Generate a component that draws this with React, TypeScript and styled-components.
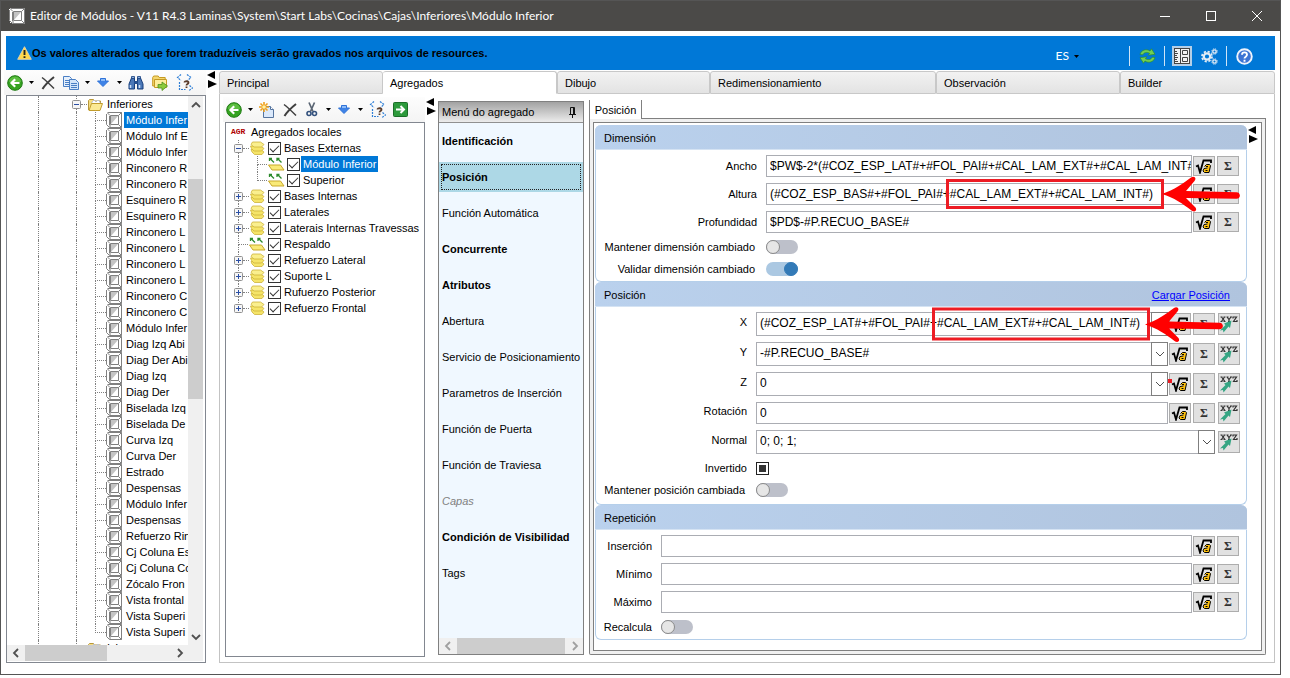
import React, { useEffect, useRef } from "react";
import styled, { createGlobalStyle, css } from "styled-components";

const GlobalStyle = createGlobalStyle`
  *, *::before, *::after { box-sizing: border-box; }
  body { margin: 0; background: #fff; }
  body, button, input, select {
    font-family: "Liberation Sans", Arial, sans-serif;
    font-size: 11px;
    line-height: 16px;
    color: #000;
  }
  button { border: 0; background: none; padding: 0; margin: 0; }
  ul { list-style: none; margin: 0; padding: 0; }
  svg { display: block; flex: none; }
`;

/* ---------- window frame ---------- */

const Page = styled.div`
  height: 100vh;
  padding: 0 9px 3px 0;
`;

const Window = styled.div`
  height: 100%;
  display: flex;
  flex-direction: column;
  border: 1px solid #555;
  background: #fff;
`;

const TitleBar = styled.header`
  display: flex;
  align-items: center;
  height: 30px;
  flex: none;
  padding-left: 8px;
  gap: 5px;
  background: #4b4a48;
  color: #fff;
`;

const Title = styled.h1`
  flex: 1;
  margin: 0;
  font: 400 12px/16px Lato, "Noto Sans", sans-serif;
  white-space: nowrap;
`;

const ControlStrip = styled.div`
  display: flex;
`;

const WindowButton = styled.button`
  width: 46px;
  height: 29px;
  display: grid;
  place-items: center;
`;

const Banner = styled.div`
  display: flex;
  align-items: center;
  flex: none;
  height: 34px;
  margin: 5px 5px 0;
  padding: 0 21px 0 11px;
  background: #0078d7;
`;

const BannerText = styled.strong`
  flex: 1;
  white-space: nowrap;
`;

const BannerTools = styled.div`
  display: flex;
  align-items: center;
  gap: 7px;
  padding-top: 6px;
`;

const LanguageButton = styled.button`
  display: flex;
  align-items: center;
  gap: 5px;
  margin-right: 43px;
  color: #fff;
  font: 400 12px/16px Lato, "Noto Sans", sans-serif;
  svg { color: #000; }
`;

const Divider = styled.span`
  width: 1px;
  height: 20px;
  background: #cfe4f7;
`;

const BannerButton = styled.button<{ $on?: boolean }>`
  display: grid;
  place-items: center;
  width: 20px;
  height: 20px;
  background: ${(p) => (p.$on ? "#b5cfe7" : "none")};
`;

const Body = styled.div`
  flex: 1;
  min-height: 0;
  display: flex;
  padding: 0 5px 11px;
`;

/* ---------- toolbars ---------- */

const Toolbar = styled.div`
  display: flex;
  align-items: center;
  flex: none;
  height: 25px;
  margin-left: -2px;
  background: linear-gradient(#fdfdfd, #f4f4f4);
`;

const ToolButton = styled.button<{ $wide?: boolean }>`
  display: grid;
  place-items: center;
  width: ${(p) => (p.$wide ? 24 : 22)}px;
  height: 24px;
`;

const CaretButton = styled.button`
  display: grid;
  place-items: center;
  width: 10px;
  height: 24px;
`;

/* ---------- trees ---------- */

const LeftColumn = styled.aside`
  width: 200px;
  flex: none;
  display: flex;
  flex-direction: column;
`;

const TreeBox = styled.div`
  flex: 1;
  min-height: 0;
  display: grid;
  grid-template-columns: 1fr 15px;
  grid-template-rows: 1fr 16px;
  border: 1px solid #828790;
  padding: 0 2px 1px 0;
  background: #fff;
`;

const TreeView = styled.ul`
  min-width: 0;
  min-height: 0;
  overflow: hidden;
`;

const TreeRow = styled.li`
  display: flex;
  align-items: center;
  height: 16px;
  white-space: nowrap;
`;

const Guide = styled.span<{ $w: number; $blank?: boolean }>`
  flex: none;
  width: ${(p) => p.$w}px;
  height: 16px;
  border-left: ${(p) => (p.$blank ? "0" : "1px dotted #808080")};
`;

const Elbow = styled.span<{ $w: number; $last?: boolean }>`
  flex: none;
  width: ${(p) => p.$w}px;
  height: 16px;
  display: flex;
  flex-direction: column;
  &::before {
    content: "";
    height: 9px;
    border-left: 1px dotted #808080;
    border-bottom: 1px dotted #808080;
  }
  &::after {
    content: "";
    flex: 1;
    border-left: ${(p) => (p.$last ? "0" : "1px dotted #808080")};
  }
`;

const Dots = styled.span<{ $w: number }>`
  flex: none;
  width: ${(p) => p.$w}px;
  border-top: 1px dotted #808080;
`;

const TreeLabel = styled.span<{ $selected?: boolean }>`
  padding: 0 2px;
  color: ${(p) => (p.$selected ? "#fff" : "#000")};
  background: ${(p) => (p.$selected ? "#0078d7" : "none")};
`;

const ClippedLabel = styled(TreeLabel)`
  margin-left: 2px;
  padding-right: 0;
  flex: 1;
`;

/* ---------- scroll bars ---------- */

const VScroll = styled.div`
  display: flex;
  flex-direction: column;
  align-items: stretch;
  background: #f0f0f0;
`;

const HScroll = styled.div`
  display: flex;
  height: 16px;
  background: #f0f0f0;
`;

const ScrollArrow = styled.button<{ $vertical?: boolean }>`
  display: grid;
  place-items: center;
  flex: none;
  width: ${(p) => (p.$vertical ? 15 : 17)}px;
  height: ${(p) => (p.$vertical ? 17 : 16)}px;
`;

const Track = styled.div<{ $before: number; $thumb: number; $after: number; $vertical?: boolean }>`
  flex: 1;
  display: grid;
  ${(p) =>
    p.$vertical
      ? css`grid-template-rows: ${p.$before}fr ${p.$thumb}fr ${p.$after}fr;`
      : css`grid-template-columns: ${p.$before}fr ${p.$thumb}fr ${p.$after}fr;`}
  &::before { content: ""; }
`;

const Thumb = styled.span`
  background: #cdcdcd;
`;

/* ---------- splitters and tabs ---------- */

const Splitter = styled.div`
  flex: none;
  width: 13px;
  padding: 1px 1px 0;
`;

const MainColumn = styled.div`
  flex: 1;
  min-width: 0;
  display: flex;
  flex-direction: column;
`;

const TabStrip = styled.div`
  display: grid;
  grid-template-columns: 164fr 174fr 153fr 226fr 184fr 155fr;
  flex: none;
  height: 24px;
  padding-top: 1px;
`;

const Tab = styled.button<{ $active?: boolean }>`
  min-width: 0;
  padding: 0 7px;
  text-align: left;
  border: 1px solid #c8c8c8;
  border-left-width: ${(p) => (p.$active ? 0 : 1)}px;
  border-bottom-color: ${(p) => (p.$active ? "#fff" : "#c8c8c8")};
  border-radius: 3px 3px 0 0;
  background: ${(p) => (p.$active ? "#fff" : "linear-gradient(#f2f2f2, #e3e3e3)")};
`;

const TabPanel = styled.main`
  flex: 1;
  min-height: 0;
  display: flex;
  border: 1px solid #c3c3c3;
  border-top: 0;
  padding: 3px 8px 5px 5px;
`;

const AggregateColumn = styled.section`
  width: 200px;
  flex: none;
  display: flex;
  flex-direction: column;
`;

const AggregateTree = styled.ul`
  flex: 1;
  min-height: 0;
  border: 1px solid #828790;
  padding-top: 1px;
  overflow: hidden;
`;

const AgrMark = styled.span`
  width: 18px;
  margin-left: 5px;
  color: #b00000;
  font: 700 8px/16px "Liberation Mono", monospace;
`;

const TreeCheck = styled.input`
  appearance: none;
  flex: none;
  width: 13px;
  height: 13px;
  margin: 0 1px 0 0;
  border: 1px solid #333;
  background: #fff;
  display: grid;
  place-items: center;
  &:checked::after {
    content: "";
    width: 9px;
    height: 5px;
    border: solid #333;
    border-width: 0 0 1px 1px;
    transform: translateY(-1px) rotate(-45deg);
  }
`;

/* ---------- aggregate menu ---------- */

const MenuPanel = styled.nav`
  width: 146px;
  flex: none;
  display: flex;
  flex-direction: column;
  margin: 4px 5px 2px 0;
  border: 1px solid #808080;
  background: #f0f8ff;
`;

const MenuHeader = styled.div`
  display: flex;
  align-items: center;
  justify-content: space-between;
  flex: none;
  height: 21px;
  padding: 0 6px 0 3px;
  border-bottom: 1px solid #909090;
  background: linear-gradient(#a2a2a2, #ececec);
`;

const MenuList = styled.ul`
  flex: 1;
  min-height: 0;
  li { padding: 3px 0; }
`;

const MenuItem = styled.button<{ $bold?: boolean; $muted?: boolean; $selected?: boolean }>`
  display: block;
  width: 100%;
  height: 30px;
  padding: 0 3px;
  text-align: left;
  white-space: nowrap;
  font-weight: ${(p) => (p.$bold ? 700 : 400)};
  font-style: ${(p) => (p.$muted ? "italic" : "normal")};
  color: ${(p) => (p.$muted ? "#808080" : "#000")};
  background: ${(p) => (p.$selected ? "#add8e6" : "none")};
  outline: ${(p) => (p.$selected ? "1px dotted #222" : "0")};
  outline-offset: -3px;
`;

/* ---------- editor ---------- */

const Editor = styled.section`
  flex: 1;
  min-width: 0;
  display: flex;
  flex-direction: column;
  margin: 3px 0 2px;
`;

const EditorTabs = styled.div`
  display: flex;
  flex: none;
  height: 19px;
  &::after {
    content: "";
    flex: 1;
    border-bottom: 1px solid #808080;
  }
`;

const EditorTab = styled.button`
  width: 53px;
  border: solid #808080;
  border-width: 0 1px;
  background: #fff;
`;

const EditorFrame = styled.div`
  flex: 1;
  min-height: 0;
  display: flex;
  border: 1px solid #808080;
  border-top: 0;
  border-radius: 0 0 2px 2px;
  padding: 3px;
  background: #f0f0f0;
`;

const EditorInner = styled.div`
  flex: 1;
  min-width: 0;
  display: flex;
  border: 1px solid #808080;
  padding: 2px 1px 0 1px;
  background: #fff;
`;

const Groups = styled.div`
  flex: 1;
  min-width: 0;
`;

const Group = styled.section<{ $bottom: number }>`
  padding-bottom: ${(p) => p.$bottom}px;
  border: 1px solid #b5cfea;
  border-top: 0;
  border-radius: 6px;
`;

const GroupHeader = styled.header`
  display: flex;
  align-items: center;
  justify-content: space-between;
  height: 25px;
  margin: 0 -1px 5px;
  padding: 2px 17px 0 9px;
  border-bottom: 1px solid #d5e3f3;
  border-radius: 6px 6px 0 0;
  background: linear-gradient(90deg, #bad1ed, #b0c4de);
`;

const GroupTitle = styled.h2`
  margin: 0;
  font-size: 11px;
  font-weight: 400;
`;

const HeaderLink = styled.a`
  color: #0000ff;
`;

const Fields = styled.div<{ $label: number; $end: number }>`
  display: grid;
  grid-template-columns: ${(p) => p.$label}px minmax(0, 1fr);
  column-gap: 9px;
  row-gap: 6px;
  padding-right: ${(p) => p.$end}px;
`;

const FieldLabel = styled.label<{ $raised?: boolean; $inset?: boolean }>`
  align-self: center;
  text-align: right;
  white-space: nowrap;
  padding-bottom: ${(p) => (p.$raised ? 4 : 0)}px;
  padding-right: ${(p) => (p.$inset ? 2 : 0)}px;
`;

const FieldRow = styled.div`
  position: relative;
  display: flex;
  align-items: center;
  gap: 2px;
  min-width: 0;
`;

const boxed = css`
  width: 100%;
  min-width: 0;
  border: 1px solid #abadb3;
  border-radius: 0;
  background: #fff;
  font-size: 12px;
  line-height: 16px;
`;

const TextBox = styled.input`
  ${boxed}
  flex: 1;
  height: 22px;
  padding: 0 0 0 3px;
`;

const ComboWrap = styled.div`
  position: relative;
  flex: 1;
  min-width: 0;
`;

const ComboSelect = styled.select`
  ${boxed}
  appearance: none;
  display: block;
  height: 24px;
  padding: 0 18px 2px 3px;
`;

const ComboArrow = styled.span`
  position: absolute;
  top: 0;
  right: 0;
  bottom: 0;
  width: 17px;
  display: grid;
  place-items: center;
  border: 1px solid #7f7f7f;
  pointer-events: none;
`;

const SquareButton = styled.button<{ $tall?: boolean; $apart?: boolean }>`
  flex: none;
  display: grid;
  place-items: center;
  width: 22px;
  height: ${(p) => (p.$tall ? 22 : 20)}px;
  margin-left: ${(p) => (p.$apart ? 1 : 0)}px;
  border: 1px solid #adadad;
  background: #e1e1e1;
`;

const FormulaButton = styled(SquareButton)`
  margin-left: -1px;
`;

const Sigma = styled.span`
  font: 700 12px/14px "Liberation Serif", serif;
  color: #333;
`;

const Switch = styled.input`
  appearance: none;
  display: block;
  width: 32px;
  height: 14px;
  margin: 1px 0;
  border-radius: 7px;
  background: #bdc0ca;
  &::before {
    content: "";
    display: block;
    width: 14px;
    height: 14px;
    border: 1px solid #8a8a8a;
    border-radius: 50%;
    background: #e6e6e6;
  }
  &:checked { background: #abc8e2; }
  &:checked::before {
    margin-left: 18px;
    border-color: #337ab7;
    background: #337ab7;
  }
`;

const TriState = styled.input`
  appearance: none;
  display: grid;
  place-items: center;
  width: 13px;
  height: 13px;
  margin: 1px 0;
  border: 1px solid #222;
  background: #fff;
  &:indeterminate::before {
    content: "";
    width: 7px;
    height: 7px;
    background: #333;
  }
`;

/* ---------- annotations drawn over the fields ---------- */

const Highlight = styled.div<{ $left: number; $height: number; $overlap: number }>`
  position: absolute;
  left: ${(p) => p.$left}px;
  top: 50%;
  width: 218px;
  height: ${(p) => p.$height}px;
  transform: translateY(-50%);
  border: 3px solid #ed1c24;
  pointer-events: none;
  z-index: 1;
  svg {
    position: absolute;
    left: calc(100% + 3px - ${(p) => p.$overlap}px);
    top: 50%;
    margin-top: -18px;
  }
`;

const RedDot = styled.span`
  position: absolute;
  right: 68px;
  top: 7px;
  width: 4px;
  height: 4px;
  background: #ed1c24;
`;

/* ---------- icons ---------- */

const BoxIcon = () => (
  <svg width="16" height="16" viewBox="0 0 16 16" fill="none" stroke="#808080">
    <path d="M0 1h1V0h15v16H3v-1H1v-2H0z" fill="#fff" stroke="none" />
    <path d="M1.500.5h14v15h-12M.5 2v10.500l3 3" />
    <path d="M4.500 3.500h8v9h-8zM3.500 4v9" />
    <path d="M5 12V4h7z" fill="#c4c4c4" stroke="none" />
    <path d="M1.500 1l2.500 2.500M15.500.5l-3 3M12.500 12.500l3 3M4 13v2.500" />
  </svg>
);

const FolderIcon = () => (
  <svg width="15" height="13" viewBox="0 0 15 13">
    <path d="M.5 12V2.500l1-1h4l1 1.500h6v2" fill="#f5dd82" stroke="#b8973a" />
    <path d="M4 4l2-2 2 2 2-2 2 2v3H4z" fill="#fff" stroke="#a9b4d0" strokeWidth=".7" />
    <path d="M1 12.500 3.500 5.500h11L12 12.500z" fill="#fbe995" stroke="#c29d2c" />
  </svg>
);

const Expander = ({ open, first, last }: { open?: boolean; first?: boolean; last?: boolean }) => (
  <svg width="9" height="16" viewBox="0 0 9 16">
    {!first && <path d="M4.500 0v4" stroke="#808080" strokeDasharray="1 1" />}
    {!last && <path d="M4.500 13v3" stroke="#808080" strokeDasharray="1 1" />}
    <rect x=".5" y="4.500" width="8" height="8" rx="1" fill="#f6f6f6" stroke="#919191" />
    <path d={open ? "M2 8.500h5" : "M2 8.500h5M4.500 6v5"} stroke="#2b4fa5" />
  </svg>
);

const LayersIcon = () => (
  <svg width="15" height="14" viewBox="0 0 15 14" fill="#f5e468" stroke="#cdb33a" strokeWidth=".8">
    <path d="M1 8.500h10l3 2.500-2 2.500H4.500L2 11z" />
    <path d="M.5 5h10L14 7.500 11.500 10H4L1.500 7.500z" />
    <path d="M2.500 1h8L14 3.500 11.500 6H4L1 3.500z" fill="#faef8e" />
  </svg>
);

const PanelIcon = () => (
  <svg width="18" height="14" viewBox="0 0 18 14">
    <path d="M1.500 8h12l3.500 5H5z" fill="#f9ea78" stroke="#c9a92b" />
    <path d="M3 1.500l4 4M2.500 4V1.500H5M10.500 1.500l4 4M10 4V1.500h2.500" stroke="#2c8a2c" strokeWidth="1.300" fill="none" />
  </svg>
);

const BackIcon = () => (
  <svg width="16" height="16" viewBox="0 0 16 16">
    <circle cx="8" cy="8" r="7.300" fill="#35a321" stroke="#1e7a12" />
    <path d="M2 7a6 5.500 0 0 1 12 0z" fill="#74cf55" opacity=".6" />
    <path d="M12.500 8H5M8.200 4.300 4.500 8l3.700 3.700" stroke="#fff" strokeWidth="2.200" fill="none" />
  </svg>
);

const Caret = () => (
  <svg width="5" height="3" viewBox="0 0 5 3">
    <path d="M0 0h5L2.500 3z" fill="currentColor" />
  </svg>
);

const CrossIcon = () => (
  <svg width="14" height="14" viewBox="0 0 14 14" stroke="#3f3f3f" fill="none">
    <path d="M1 1.500c4 3 8 7 12 11" strokeWidth="1.500" />
    <path d="M13 1C8 5 4 9 1.500 13" strokeWidth="2" />
  </svg>
);

const CopyIcon = () => (
  <svg width="16" height="14" viewBox="0 0 16 14" stroke="#4a7fc4">
    <path d="M.5.5h6l2 2v8h-8z" fill="#e6f0fc" />
    <path d="M2 4.500h4M2 6.500h4M2 8.500h4" />
    <path d="M6.500 3.500h6l3 3v7h-9z" fill="#d3e5fa" />
    <path d="M8 7.500h6M8 9.500h6M8 11.500h6" />
  </svg>
);

const DownIcon = () => (
  <svg width="12" height="9" viewBox="0 0 12 9">
    <path d="M3.500.5h5V3h3L6 8.500.5 3h3z" fill="#3f83e6" stroke="#2f72d8" />
    <path d="M4 1h4v2H4z" fill="#8dbcf8" />
  </svg>
);

const BinocularsIcon = () => (
  <svg width="16" height="14" viewBox="0 0 16 14">
    <path d="M1 13V8l2.500-6h3v11zM15 13V8l-2.500-6h-3v11z" fill="#4b78b8" stroke="#173f7d" />
    <path d="M6 5h4v3H6z" fill="#264f8f" />
    <path d="M3.500.5h3v2h-3zM9.500.5h3v2h-3z" fill="#8fb2e0" stroke="#173f7d" strokeWidth=".8" />
    <path d="M2.500 9v3M11.500 9v3" stroke="#cfe0f7" strokeWidth="1.500" />
  </svg>
);

const FolderArrowIcon = () => (
  <svg width="16" height="16" viewBox="0 0 16 16">
    <path d="M.7 11V2.500l1-1.500h4.500l1 1.500h6V11z" fill="#f5d76e" stroke="#c59a22" />
    <path d="M2.500 12.500v-8h12v8z" fill="#fdee9d" stroke="#c59a22" />
    <path d="M6 9.500h4V7l5.500 4-5.500 4.500V13H6z" fill="#8ccb3c" stroke="#4f8f1c" strokeWidth=".8" />
  </svg>
);

const QueryIcon = () => (
  <svg width="17" height="17" viewBox="0 0 17 17" fill="none">
    <path d="M5 .5 1.500 3.500 5 6.500M11 .5l4 3-3.500 3M3.500 8v7.500h6M13.500 11.500l3 2.500-3.500 2.500" stroke="#2f7fd6" strokeWidth="1.200" strokeDasharray="2 1" />
    <path d="M8.500 8.500c0-1.700 4-1.700 4 .2 0 1.500-2 1.300-2 2.800M10.500 12.500v1.500" stroke="#5b3d2b" strokeWidth="1.800" />
  </svg>
);

const NewIcon = () => (
  <svg width="16" height="16" viewBox="0 0 16 16">
    <path d="M4.500 4.500h7l3 3v8h-10z" fill="#dbe9fb" stroke="#55749f" />
    <path d="M11.500 4.500v3h3" fill="#fff" stroke="#55749f" />
    <path d="M5 0v10M0 5h10M1.500 1.500l7 7M8.500 1.500l-7 7" stroke="#f0a11c" strokeWidth="1.600" />
    <circle cx="5" cy="5" r="1.800" fill="#fff2a8" />
  </svg>
);

const CutIcon = () => (
  <svg width="12" height="15" viewBox="0 0 12 15" fill="none">
    <path d="M3 .5l4 9M8.500.5 4.500 9.500" stroke="#5a6573" strokeWidth="1.700" />
    <circle cx="3" cy="11.500" r="2" stroke="#34527e" strokeWidth="1.600" />
    <circle cx="8.500" cy="11.500" r="2" stroke="#34527e" strokeWidth="1.600" />
  </svg>
);

const GoIcon = () => (
  <svg width="15" height="15" viewBox="0 0 15 15">
    <rect x=".5" y=".5" width="14" height="14" rx="1" fill="#2d9a3c" stroke="#1b6e28" />
    <path d="M3 7.500h8M7.500 4 11 7.500 7.500 11" stroke="#fff" strokeWidth="2" fill="none" />
  </svg>
);

const WarningIcon = () => (
  <svg width="15" height="14" viewBox="0 0 15 14">
    <path d="M7.500.7 14.300 13.300H.7z" fill="#ffd84a" stroke="#d9cfae" strokeLinejoin="round" />
    <path d="M7.500 4v5M7.500 10.200v1.800" stroke="#222" strokeWidth="1.900" />
  </svg>
);

const SyncIcon = () => (
  <svg width="17" height="16" viewBox="0 0 17 16" fill="#6fce55" stroke="#2c8a1c" strokeWidth=".6">
    <path d="M1 6.500C2 2 7.500.5 11 3L12.500.8 16 6.300l-6.700.9 1.300-2C8 3.800 5 4.200 3.800 6.800z" />
    <path d="M16 9.500c-1 4.500-6.500 6-10 3.500l-1.500 2.200L1 9.700l6.700-.9-1.300 2c2.600 1.400 5.600 1 6.800-1.600z" />
  </svg>
);

const FormIcon = () => (
  <svg width="16" height="16" viewBox="0 0 16 16" fill="#f3f3f3" stroke="#444">
    <rect x=".5" y=".5" width="15" height="15" />
    <path d="M6.500 1v14M1 3.500h2M1 5.500h3M1 7.500h2M1 9.500h3M1 11.500h2M1 13.500h3" />
    <path d="M8.500 2.500h5v4h-5zM8.500 9.500h5v4h-5z" />
  </svg>
);

const GearsIcon = () => (
  <svg width="17" height="17" viewBox="0 0 17 17" fill="none" stroke="#e3ecf5">
    <circle cx="6" cy="8.500" r="3.200" strokeWidth="2.200" />
    <circle cx="6" cy="8.500" r="5" strokeWidth="1.800" strokeDasharray="2.200 1.730" />
    <circle cx="13.500" cy="3.500" r="1.700" strokeWidth="1.300" />
    <circle cx="13.500" cy="3.500" r="2.700" strokeWidth="1" strokeDasharray="1.200 .92" />
    <circle cx="13.500" cy="13.500" r="1.700" strokeWidth="1.300" />
    <circle cx="13.500" cy="13.500" r="2.700" strokeWidth="1" strokeDasharray="1.200 .92" />
  </svg>
);

const HelpIcon = () => (
  <svg width="17" height="17" viewBox="0 0 17 17" fill="none">
    <circle cx="8.500" cy="8.500" r="7.300" fill="#3c74d4" stroke="#eef3fc" strokeWidth="1.900" />
    <path d="M6 6.800c0-3.200 5-3.200 5 0 0 1.900-2.500 1.800-2.500 3.700M8.500 11.800v1.900" stroke="#fff" strokeWidth="1.900" />
  </svg>
);

const PinIcon = () => (
  <svg width="9" height="11" viewBox="0 0 9 11" fill="none" stroke="#111">
    <path d="M2.500 7V.5h4V7M1 7.500h7M4.500 8v3M5.500 1v6" />
  </svg>
);

const SplitArrows = () => (
  <svg width="11" height="17" viewBox="0 0 11 17">
    <path d="M8 0v8L0 4zM1 9v8l9-4z" fill="#000" />
  </svg>
);

const RootIcon = () => (
  <svg width="18" height="16" viewBox="0 0 18 16" fill="none">
    <path d="M1 8.500l2-1 2 7L8.500 2.500H16V5" stroke="#000" strokeWidth="1.800" />
    <path d="M9.500 8.500l2-2h3l1 1.200-1.500 6.800H9.500L8 13l1-2.500 3.500-.5" fill="#ffc20e" stroke="#000" />
    <path d="M10.500 12.500h2M13 8.500h-2" stroke="#000" />
  </svg>
);

const XyzIcon = () => (
  <svg width="18" height="17" viewBox="0 0 18 17" fill="none">
    <path d="M1.500 1 5 5.500M4.500 1 1.500 5.500M.5 1h2M3.500 1h2M.5 5.500h2M3.500 5.500h2M7 1l2 2.500L11 1M9 3.500v2M6.500 1h2M10 1h2M8 5.500h2M13 2.500V1h3.500L13.500 5.500h3.500V4" stroke="#333" strokeWidth="1.200" />
    <path d="M0 14.500 5.500 9 4 7.500l7.500-3L10 12 8.500 10.500 3.500 16.500 3 14z" fill="#35a583" />
  </svg>
);

const Chevron = ({ turn, color = "#505050", thin }: { turn: number; color?: string; thin?: boolean }) => (
  <svg width="10" height="10" viewBox="0 0 10 10" fill="none">
    <path d="M1 3 5 7 9 3" stroke={color} strokeWidth={thin ? 1 : 1.800} transform={`rotate(${turn} 5 5)`} />
  </svg>
);

const RedArrow = () => (
  <svg width="78" height="36" viewBox="0 0 78 36">
    <path
      d="M0 18C12 14 22 7 29 1.500c3-2 6 .5 3.500 3.500L24 15l50.500 1.200c4.500.3 4.500 6.300 0 6.500L24 22l9.500 9.500c2 3.500-1 5-4 3C21 28 12 21.500 0 18z"
      fill="#ff0000"
    />
  </svg>
);

/* ---------- data ---------- */

const moduleNames = [
  "Módulo Infer", "Módulo Inf E", "Módulo Infer", "Rinconero R", "Rinconero R", "Esquinero R", "Esquinero R",
  "Rinconero L", "Rinconero L", "Rinconero L", "Rinconero L", "Rinconero C", "Rinconero C", "Módulo Infer",
  "Diag Izq Abi", "Diag Der Abi", "Diag Izq", "Diag Der", "Biselada Izq", "Biselada De", "Curva Izq", "Curva Der",
  "Estrado", "Despensas", "Módulo Infer", "Despensas", "Refuerzo Rin", "Cj Coluna Es", "Cj Coluna Co",
  "Zócalo Fron", "Vista frontal", "Vista Superi", "Vista Superi",
];

type Aggregate = { name: string; kind: "group" | "child" | "leaf"; open?: boolean; last?: boolean; selected?: boolean };

const aggregates: Aggregate[] = [
  { name: "Bases Externas", kind: "group", open: true },
  { name: "Módulo Inferior", kind: "child", selected: true },
  { name: "Superior", kind: "child", last: true },
  { name: "Bases Internas", kind: "group" },
  { name: "Laterales", kind: "group" },
  { name: "Laterais Internas Travessas", kind: "group" },
  { name: "Respaldo", kind: "leaf" },
  { name: "Refuerzo Lateral", kind: "group" },
  { name: "Suporte L", kind: "group" },
  { name: "Rufuerzo Posterior", kind: "group" },
  { name: "Refuerzo Frontal", kind: "group" },
];

const tabs = ["Principal", "Agregados", "Dibujo", "Redimensionamiento", "Observación", "Builder"];

const menuItems = [
  { name: "Identificación", bold: true },
  { name: "Posición", bold: true, selected: true },
  { name: "Función Automática" },
  { name: "Concurrente", bold: true },
  { name: "Atributos", bold: true },
  { name: "Abertura" },
  { name: "Servicio de Posicionamiento" },
  { name: "Parametros de Inserción" },
  { name: "Función de Puerta" },
  { name: "Función de Traviesa" },
  { name: "Capas", muted: true },
  { name: "Condición de Visibilidad", bold: true },
  { name: "Tags" },
];

/* ---------- composed parts ---------- */

const WindowControls = () => (
  <ControlStrip>
    <WindowButton aria-label="Minimizar">
      <svg width="10" height="10" viewBox="0 0 10 10"><path d="M0 5.500h10" stroke="#fff" /></svg>
    </WindowButton>
    <WindowButton aria-label="Maximizar">
      <svg width="10" height="10" viewBox="0 0 10 10"><rect x=".5" y=".5" width="9" height="9" fill="none" stroke="#fff" /></svg>
    </WindowButton>
    <WindowButton aria-label="Cerrar">
      <svg width="10" height="10" viewBox="0 0 10 10"><path d="M0 0l10 10M10 0 0 10" stroke="#fff" /></svg>
    </WindowButton>
  </ControlStrip>
);

const FormulaButtons = ({ tall }: { tall?: boolean }) => (
  <>
    <FormulaButton $tall={tall} aria-label="Fórmula"><RootIcon /></FormulaButton>
    <SquareButton $tall={tall} aria-label="Sumatoria"><Sigma>Σ</Sigma></SquareButton>
  </>
);

const XyzButton = () => (
  <SquareButton $tall $apart aria-label="Coordenadas"><XyzIcon /></SquareButton>
);

const Combo = ({ id, value }: { id: string; value: string }) => (
  <ComboWrap>
    <ComboSelect id={id} defaultValue={value}><option>{value}</option></ComboSelect>
    <ComboArrow><Chevron turn={0} thin /></ComboArrow>
  </ComboWrap>
);

const AggregateRow = ({ item, end }: { item: Aggregate; end: boolean }) => {
  const id = "agr-" + item.name.replace(/\s+/g, "-");
  return (
    <TreeRow>
      {item.kind === "group" && (
        <>
          <Guide $w={8} $blank /><Expander open={item.open} last={end} /><Dots $w={6} />
          <Guide $w={1} $blank /><LayersIcon /><Guide $w={3} $blank />
        </>
      )}
      {item.kind === "leaf" && (
        <><Guide $w={12} $blank /><Elbow $w={10} $last={end} /><PanelIcon /><Guide $w={2} $blank /></>
      )}
      {item.kind === "child" && (
        <><Guide $w={12} $blank /><Guide $w={19} /><Elbow $w={10} $last={item.last} /><PanelIcon /><Guide $w={2} $blank /></>
      )}
      <TreeCheck type="checkbox" id={id} defaultChecked />
      <TreeLabel as="label" htmlFor={id} $selected={item.selected}>{item.name}</TreeLabel>
    </TreeRow>
  );
};

export default function App() {
  const invertido = useRef<HTMLInputElement>(null);
  useEffect(() => {
    if (invertido.current) invertido.current.indeterminate = true;
  }, []);

  return (
    <Page>
      <GlobalStyle />
      <Window>
        <TitleBar>
          <BoxIcon />
          <Title>Editor de Módulos - V11 R4.3 Laminas\System\Start Labs\Cocinas\Cajas\Inferiores\Módulo Inferior</Title>
          <WindowControls />
        </TitleBar>

        <Banner>
          <WarningIcon />
          <BannerText>Os valores alterados que forem traduzíveis serão gravados nos arquivos de resources.</BannerText>
          <BannerTools>
            <LanguageButton>ES <Caret /></LanguageButton>
            <Divider />
            <BannerButton aria-label="Actualizar"><SyncIcon /></BannerButton>
            <Divider />
            <BannerButton $on aria-label="Formulario"><FormIcon /></BannerButton>
            <BannerButton aria-label="Configuración"><GearsIcon /></BannerButton>
            <Divider />
            <BannerButton aria-label="Ayuda"><HelpIcon /></BannerButton>
          </BannerTools>
        </Banner>

        <Body>
          <LeftColumn>
            <Toolbar>
              <ToolButton aria-label="Agregar"><BackIcon /></ToolButton>
              <CaretButton aria-label="Más"><Caret /></CaretButton>
              <ToolButton $wide aria-label="Eliminar"><CrossIcon /></ToolButton>
              <ToolButton aria-label="Copiar"><CopyIcon /></ToolButton>
              <CaretButton aria-label="Más"><Caret /></CaretButton>
              <ToolButton aria-label="Bajar"><DownIcon /></ToolButton>
              <CaretButton aria-label="Más"><Caret /></CaretButton>
              <ToolButton $wide aria-label="Buscar"><BinocularsIcon /></ToolButton>
              <ToolButton $wide aria-label="Mover"><FolderArrowIcon /></ToolButton>
              <ToolButton $wide aria-label="Consultar"><QueryIcon /></ToolButton>
            </Toolbar>
            <TreeBox>
              <TreeView>
                <TreeRow>
                  <Guide $w={31} $blank /><Guide $w={34} /><Expander open /><Dots $w={6} /><Guide $w={1} $blank />
                  <FolderIcon /><ClippedLabel>Inferiores</ClippedLabel>
                </TreeRow>
                {moduleNames.map((name, i) => (
                  <TreeRow key={i}>
                    <Guide $w={31} $blank /><Guide $w={38} /><Guide $w={19} />
                    <Elbow $w={11} $last={i === moduleNames.length - 1} />
                    <BoxIcon />
                    <ClippedLabel $selected={i === 0}>{name}</ClippedLabel>
                  </TreeRow>
                ))}
                <TreeRow>
                  <Guide $w={31} $blank /><Guide $w={38} /><Guide $w={12} />
                  <FolderIcon /><ClippedLabel>Isla</ClippedLabel>
                </TreeRow>
              </TreeView>
              <VScroll>
                <ScrollArrow $vertical aria-label="Subir"><Chevron turn={180} /></ScrollArrow>
                <Track $vertical $before={66} $thumb={221} $after={229}><Thumb /></Track>
                <ScrollArrow $vertical aria-label="Bajar"><Chevron turn={0} /></ScrollArrow>
              </VScroll>
              <HScroll>
                <ScrollArrow aria-label="Izquierda"><Chevron turn={90} /></ScrollArrow>
                <Track $before={1} $thumb={82} $after={64}><Thumb /></Track>
                <ScrollArrow aria-label="Derecha"><Chevron turn={270} /></ScrollArrow>
              </HScroll>
              <HScroll />
            </TreeBox>
          </LeftColumn>

          <Splitter><SplitArrows /></Splitter>

          <MainColumn>
            <TabStrip>
              {tabs.map((name) => (
                <Tab key={name} $active={name === "Agregados"}>{name}</Tab>
              ))}
            </TabStrip>
            <TabPanel>
              <AggregateColumn>
                <Toolbar>
                  <ToolButton aria-label="Agregar"><BackIcon /></ToolButton>
                  <CaretButton aria-label="Más"><Caret /></CaretButton>
                  <ToolButton $wide aria-label="Nuevo"><NewIcon /></ToolButton>
                  <ToolButton aria-label="Eliminar"><CrossIcon /></ToolButton>
                  <ToolButton aria-label="Cortar"><CutIcon /></ToolButton>
                  <CaretButton aria-label="Más"><Caret /></CaretButton>
                  <ToolButton aria-label="Bajar"><DownIcon /></ToolButton>
                  <CaretButton aria-label="Más"><Caret /></CaretButton>
                  <ToolButton $wide aria-label="Consultar"><QueryIcon /></ToolButton>
                  <ToolButton aria-label="Ir"><GoIcon /></ToolButton>
                </Toolbar>
                <AggregateTree>
                  <TreeRow><AgrMark>AGR</AgrMark><TreeLabel>Agregados locales</TreeLabel></TreeRow>
                  {aggregates.map((a, i) => (
                    <AggregateRow key={a.name} item={a} end={i === aggregates.length - 1} />
                  ))}
                </AggregateTree>
              </AggregateColumn>

              <Splitter><SplitArrows /></Splitter>

              <MenuPanel>
                <MenuHeader>Menú do agregado <PinIcon /></MenuHeader>
                <MenuList>
                  {menuItems.map((m) => (
                    <li key={m.name}>
                      <MenuItem $bold={m.bold} $muted={m.muted} $selected={m.selected}>{m.name}</MenuItem>
                    </li>
                  ))}
                </MenuList>
                <HScroll>
                  <ScrollArrow aria-label="Izquierda"><Chevron turn={90} color="#a0a0a0" /></ScrollArrow>
                  <Track $before={1} $thumb={108} $after={1}><Thumb /></Track>
                  <ScrollArrow aria-label="Derecha"><Chevron turn={270} color="#a0a0a0" /></ScrollArrow>
                </HScroll>
              </MenuPanel>

              <Editor>
                <EditorTabs><EditorTab>Posición</EditorTab></EditorTabs>
                <EditorFrame>
                  <EditorInner>
                    <Groups>
                      <Group $bottom={4}>
                        <GroupHeader><GroupTitle>Dimensión</GroupTitle></GroupHeader>
                        <Fields $label={161} $end={7}>
                          <FieldLabel htmlFor="ancho">Ancho</FieldLabel>
                          <FieldRow>
                            <TextBox id="ancho" defaultValue="$PW$-2*(#COZ_ESP_LAT#+#FOL_PAI#+#CAL_LAM_EXT#+#CAL_LAM_INT#)" />
                            <FormulaButtons />
                          </FieldRow>
                          <FieldLabel htmlFor="altura">Altura</FieldLabel>
                          <FieldRow>
                            <TextBox id="altura" defaultValue="(#COZ_ESP_BAS#+#FOL_PAI#+#CAL_LAM_EXT#+#CAL_LAM_INT#)" />
                            <FormulaButtons />
                            <Highlight $left={180} $height={30} $overlap={2}><RedArrow /></Highlight>
                          </FieldRow>
                          <FieldLabel htmlFor="profundidad">Profundidad</FieldLabel>
                          <FieldRow>
                            <TextBox id="profundidad" defaultValue="$PD$-#P.RECUO_BASE#" />
                            <FormulaButtons />
                          </FieldRow>
                          <FieldLabel htmlFor="mantener-dim" $inset>Mantener dimensión cambiado</FieldLabel>
                          <FieldRow><Switch type="checkbox" id="mantener-dim" /></FieldRow>
                          <FieldLabel htmlFor="validar-dim" $inset>Validar dimensión cambiado</FieldLabel>
                          <FieldRow><Switch type="checkbox" id="validar-dim" defaultChecked /></FieldRow>
                        </Fields>
                      </Group>

                      <Group $bottom={6}>
                        <GroupHeader>
                          <GroupTitle>Posición</GroupTitle>
                          <HeaderLink href="#cargar">Cargar Posición</HeaderLink>
                        </GroupHeader>
                        <Fields $label={151} $end={6}>
                          <FieldLabel htmlFor="x" $raised>X</FieldLabel>
                          <FieldRow>
                            <Combo id="x" value="(#COZ_ESP_LAT#+#FOL_PAI#+#CAL_LAM_EXT#+#CAL_LAM_INT#)" />
                            <FormulaButtons tall />
                            <XyzButton />
                            <Highlight $left={176} $height={33} $overlap={5}><RedArrow /></Highlight>
                          </FieldRow>
                          <FieldLabel htmlFor="y" $raised>Y</FieldLabel>
                          <FieldRow>
                            <Combo id="y" value="-#P.RECUO_BASE#" />
                            <FormulaButtons tall />
                            <XyzButton />
                          </FieldRow>
                          <FieldLabel htmlFor="z" $raised>Z</FieldLabel>
                          <FieldRow>
                            <Combo id="z" value="0" />
                            <FormulaButtons tall />
                            <XyzButton />
                            <RedDot />
                          </FieldRow>
                          <FieldLabel htmlFor="rotacion" $raised>Rotación</FieldLabel>
                          <FieldRow>
                            <TextBox id="rotacion" defaultValue="0" />
                            <FormulaButtons />
                            <XyzButton />
                          </FieldRow>
                          <FieldLabel htmlFor="normal" $raised>Normal</FieldLabel>
                          <FieldRow>
                            <Combo id="normal" value="0; 0; 1;" />
                            <XyzButton />
                          </FieldRow>
                          <FieldLabel htmlFor="invertido">Invertido</FieldLabel>
                          <FieldRow><TriState ref={invertido} type="checkbox" id="invertido" /></FieldRow>
                          <FieldLabel htmlFor="mantener-pos" $inset>Mantener posición cambiada</FieldLabel>
                          <FieldRow><Switch type="checkbox" id="mantener-pos" /></FieldRow>
                        </Fields>
                      </Group>

                      <Group $bottom={4}>
                        <GroupHeader><GroupTitle>Repetición</GroupTitle></GroupHeader>
                        <Fields $label={56} $end={7}>
                          <FieldLabel htmlFor="insercion">Inserción</FieldLabel>
                          <FieldRow><TextBox id="insercion" /><FormulaButtons /></FieldRow>
                          <FieldLabel htmlFor="minimo">Mínimo</FieldLabel>
                          <FieldRow><TextBox id="minimo" /><FormulaButtons /></FieldRow>
                          <FieldLabel htmlFor="maximo">Máximo</FieldLabel>
                          <FieldRow><TextBox id="maximo" /><FormulaButtons /></FieldRow>
                          <FieldLabel htmlFor="recalcula">Recalcula</FieldLabel>
                          <FieldRow><Switch type="checkbox" id="recalcula" /></FieldRow>
                        </Fields>
                      </Group>
                    </Groups>
                    <Splitter><SplitArrows /></Splitter>
                  </EditorInner>
                </EditorFrame>
              </Editor>
            </TabPanel>
          </MainColumn>
        </Body>
      </Window>
    </Page>
  );
}
